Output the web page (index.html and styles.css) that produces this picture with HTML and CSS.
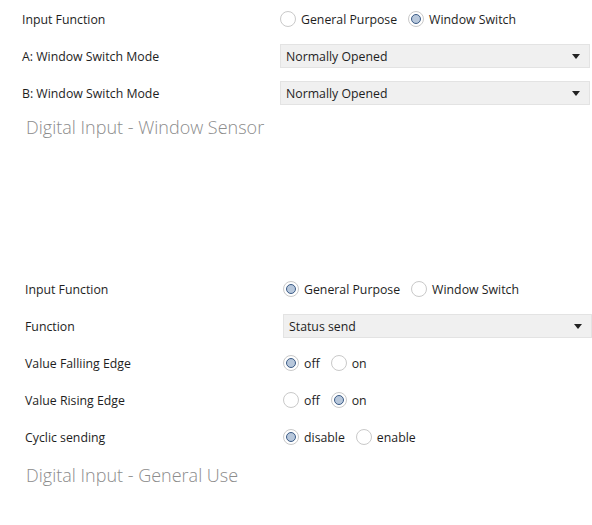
FILE: index.html
```html
<!DOCTYPE html>
<html>
<head>
<meta charset="utf-8">
<link rel="stylesheet" href="styles.css">
</head>
<body>
<section class="panel panel-top">
  <div class="row">
    <div class="label">Input Function</div>
    <div class="control radios">
      <span class="opt"><span class="radio"></span>General Purpose</span>
      <span class="opt"><span class="radio checked"></span>Window Switch</span>
    </div>
  </div>
  <div class="row">
    <div class="label">A: Window Switch Mode</div>
    <div class="control"><div class="select"><span>Normally Opened</span><span class="arrow"></span></div></div>
  </div>
  <div class="row">
    <div class="label">B: Window Switch Mode</div>
    <div class="control"><div class="select"><span>Normally Opened</span><span class="arrow"></span></div></div>
  </div>
  <h2 class="title">Digital Input - Window Sensor</h2>
</section>

<section class="panel panel-bottom">
  <div class="row">
    <div class="label">Input Function</div>
    <div class="control radios">
      <span class="opt"><span class="radio checked"></span>General Purpose</span>
      <span class="opt"><span class="radio"></span>Window Switch</span>
    </div>
  </div>
  <div class="row">
    <div class="label">Function</div>
    <div class="control"><div class="select"><span>Status send</span><span class="arrow"></span></div></div>
  </div>
  <div class="row">
    <div class="label">Value Falliing Edge</div>
    <div class="control radios">
      <span class="opt"><span class="radio checked"></span>off</span>
      <span class="opt"><span class="radio"></span>on</span>
    </div>
  </div>
  <div class="row">
    <div class="label">Value Rising Edge</div>
    <div class="control radios">
      <span class="opt"><span class="radio"></span>off</span>
      <span class="opt"><span class="radio checked"></span>on</span>
    </div>
  </div>
  <div class="row row-last">
    <div class="label">Cyclic sending</div>
    <div class="control radios">
      <span class="opt"><span class="radio checked"></span>disable</span>
      <span class="opt"><span class="radio"></span>enable</span>
    </div>
  </div>
  <h2 class="title">Digital Input - General Use</h2>
</section>
</body>
</html>
```
FILE: styles.css
```css
html, body {
  margin: 0;
  padding: 0;
  background: #ffffff;
}
body {
  width: 592px;
  font-family: "Open Sans", "Noto Sans", sans-serif;
  font-size: 12.3px;
  color: #1e1e1e;
}
.panel {
  display: flex;
  flex-direction: column;
  gap: 1px;
}
.panel-top {
  padding: 1px 2px 0 22px;
}
.panel-bottom {
  margin-top: 123px;
  padding: 0 0 0 25px;
}
.row {
  display: grid;
  grid-template-columns: 258px 1fr;
  align-items: center;
  height: 36px;
}
.label {
  white-space: nowrap;
}
.radios {
  display: flex;
  align-items: center;
}
.opt {
  display: inline-flex;
  align-items: center;
  margin-right: 11px;
}
.radio {
  box-sizing: border-box;
  width: 16px;
  height: 16px;
  border-radius: 50%;
  border: 1px solid #c9c9c9;
  background: #ffffff;
  margin-right: 5px;
  position: relative;
}
.radio.checked::after {
  content: "";
  position: absolute;
  left: 2px;
  top: 2px;
  width: 10px;
  height: 10px;
  box-sizing: border-box;
  border-radius: 50%;
  border: 1.5px solid #3b5b86;
  background: #b7c7db;
}
.select {
  box-sizing: border-box;
  height: 24px;
  background: #f0f0f0;
  border: 1px solid #e3e3e3;
  display: flex;
  align-items: center;
  justify-content: space-between;
  padding: 0 9px 0 5px;
}
.arrow {
  width: 0;
  height: 0;
  border-left: 4px solid transparent;
  border-right: 4px solid transparent;
  border-top: 5px solid #222;
}
.title {
  margin: 0;
  padding-left: 4px;
  height: 36px;
  line-height: 30px;
  font-family: "Open Sans", "Noto Sans", sans-serif;
  font-weight: 300;
  font-size: 18px;
  color: #8c8c8c;
}
.panel-bottom .title {
  padding-left: 1px;
  margin-top: 4px;
}
```
